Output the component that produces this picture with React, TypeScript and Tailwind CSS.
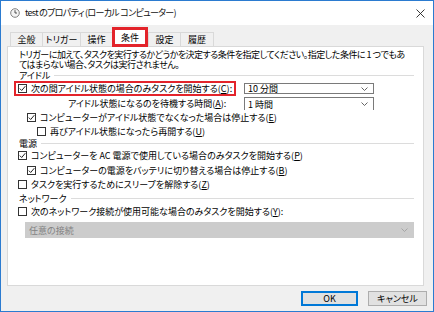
import React from "react";

function Check({ checked }: { checked?: boolean }) {
  return (
    <span className="w-[9px] h-[9px] border border-[#333333] bg-white flex items-center justify-center shrink-0">
      {checked && (
        <svg width="7" height="7" viewBox="0 0 7 7">
          <path d="M0.8 3.6 L2.7 5.5 L6.3 1.2" fill="none" stroke="#222" strokeWidth="1" />
        </svg>
      )}
    </span>
  );
}

function Chevron({ color = "#555" }: { color?: string }) {
  return (
    <svg width="7" height="4" viewBox="0 0 7 4" className="shrink-0">
      <path d="M0.5 0.5 L3.5 3.5 L6.5 0.5" fill="none" stroke={color} strokeWidth="0.9" />
    </svg>
  );
}

function GroupLabel({ text, h }: { text: string; h: string }) {
  return (
    <div className={`flex items-center pl-[11px] pr-[9px] ${h}`}>
      <span className="shrink-0">{text}</span>
      <span className="ml-[4px] flex-1 h-px bg-[#dcdcdc]" />
    </div>
  );
}

function Tab({ label, w, last }: { label: string; w: string; last?: boolean }) {
  return (
    <div
      className={`${w} h-[14px] flex items-center justify-center border-t border-l border-[#d9d9d9] ${
        last ? "border-r" : ""
      }`}
    >
      {label}
    </div>
  );
}

export default function App() {
  return (
    <div className="w-[434px] h-[312px] bg-[#f0f0f0] border border-[#2b7bd0] flex flex-col text-black font-['Noto_Sans_CJK_JP',sans-serif] [font-feature-settings:'palt'] text-[9px] leading-[9px] overflow-hidden">
      {/* title bar */}
      <div className="h-[24px] bg-white flex items-center shrink-0">
        <svg width="10" height="10" viewBox="0 0 10 10" className="ml-[9px] shrink-0">
          <circle cx="5" cy="5" r="4.3" fill="#f4f4f4" stroke="#808080" strokeWidth="1" />
          <path d="M5 2.2 V5 H7" fill="none" stroke="#404040" strokeWidth="0.9" />
        </svg>
        <span className="ml-[5px] text-[9px] leading-[10px] tracking-[-0.7px] whitespace-pre text-[#111]">
          test のプロパティ (ローカル コンピューター)
        </span>
        <svg width="9" height="9" viewBox="0 0 9 9" className="ml-auto mr-[8px] shrink-0">
          <path d="M0.5 0.5 L8.5 8.5 M8.5 0.5 L0.5 8.5" stroke="#222" strokeWidth="0.9" />
        </svg>
      </div>

      {/* tabs */}
      <div className="h-[21px] flex items-end pl-[9px] shrink-0 relative z-10">
        <Tab label="全般" w="w-[32px]" />
        <Tab label="トリガー" w="w-[38px]" />
        <Tab label="操作" w="w-[32px]" />
        <div className="w-[36px] h-[20px] -mb-[1px] bg-white border-[3px] border-[#e3242b] flex items-center justify-center">
          条件
        </div>
        <Tab label="設定" w="w-[32px]" />
        <Tab label="履歴" w="w-[34px]" last />
      </div>

      {/* panel */}
      <div className="ml-[6px] mr-[9px] h-[240px] bg-white border border-[#d9d9d9] flex flex-col shrink-0">
        <p className="mt-[3px] pl-[11px] leading-[10px] tracking-[-0.5px] whitespace-nowrap">
          トリガーに加えて、タスクを実行するかどうかを決定する条件を指定してください。指定した条件に 1 つでもあ
          <br />
          てはまらない場合、タスクは実行されません。
        </p>
        <GroupLabel text="アイドル" h="h-[10px]" />

        {/* row 1 */}
        <div className="mt-[1px] h-[15px] flex items-center pl-[6px]">
          <div className="w-[222px] h-[15px] border-[2px] border-[#e3242b] flex items-center pl-[2px]">
            <Check checked />
            <span className="ml-[4px] whitespace-nowrap">次の間アイドル状態の場合のみタスクを開始する(<u>C</u>):</span>
          </div>
          <div className="ml-[8px] w-[130px] h-[11px] border border-[#7a7a7a] flex items-center pl-[3px] pr-[5px]">
            <span className="flex-1">10 分間</span>
            <Chevron />
          </div>
        </div>

        {/* row 2 */}
        <div className="h-[14px] flex items-end pl-[6px]">
          <div className="w-[222px] h-[14px] flex items-center pl-[54px] whitespace-nowrap">
            アイドル状態になるのを待機する時間(<u>A</u>):
          </div>
          <div className="ml-[8px] w-[130px] h-[13px] border-t border-l border-r border-[#7a7a7a] flex items-center pl-[3px] pr-[5px]">
            <span className="flex-1">1 時間</span>
            <Chevron />
          </div>
        </div>

        {/* row 3 */}
        <div className="h-[14px] flex items-center pl-[19px]">
          <Check checked />
          <span className="ml-[4px] whitespace-nowrap">コンピューターがアイドル状態でなくなった場合は停止する(<u>E</u>)</span>
        </div>

        {/* row 4 */}
        <div className="h-[14px] flex items-center pl-[29px]">
          <Check />
          <span className="ml-[4px] whitespace-nowrap">再びアイドル状態になったら再開する(<u>U</u>)</span>
        </div>

        <GroupLabel text="電源" h="h-[10px]" />

        <div className="h-[15px] flex items-center pl-[10px]">
          <Check checked />
          <span className="ml-[4px] whitespace-nowrap">コンピューターを AC 電源で使用している場合のみタスクを開始する(<u>P</u>)</span>
        </div>
        <div className="h-[15px] flex items-center pl-[19px]">
          <Check checked />
          <span className="ml-[4px] whitespace-nowrap">コンピューターの電源をバッテリに切り替える場合は停止する(<u>B</u>)</span>
        </div>
        <div className="h-[13px] flex items-center pl-[10px]">
          <Check />
          <span className="ml-[4px] whitespace-nowrap">タスクを実行するためにスリープを解除する(<u>Z</u>)</span>
        </div>

        <GroupLabel text="ネットワーク" h="h-[15px]" />

        <div className="h-[10px] flex items-center pl-[10px]">
          <Check />
          <span className="ml-[4px] whitespace-nowrap">次のネットワーク接続が使用可能な場合のみタスクを開始する(<u>Y</u>):</span>
        </div>
        <div className="mt-[6px] ml-[17px] mr-[9px] h-[16px] bg-[#cccccc] flex items-center pl-[4px] pr-[6px] text-[#838383]">
          <span className="flex-1">任意の接続</span>
          <Chevron color="#a0a0a0" />
        </div>
      </div>

      {/* buttons */}
      <div className="h-[25px] pt-[5px] flex justify-end pr-[6px] shrink-0">
        <button className="w-[57px] h-[15px] bg-[#e1e1e1] border-2 border-[#0078d7] flex items-center justify-center leading-[9px]">
          OK
        </button>
        <button className="ml-[10px] w-[59px] h-[15px] bg-[#e1e1e1] border border-[#adadad] flex items-center justify-center leading-[9px]">
          キャンセル
        </button>
      </div>
    </div>
  );
}
